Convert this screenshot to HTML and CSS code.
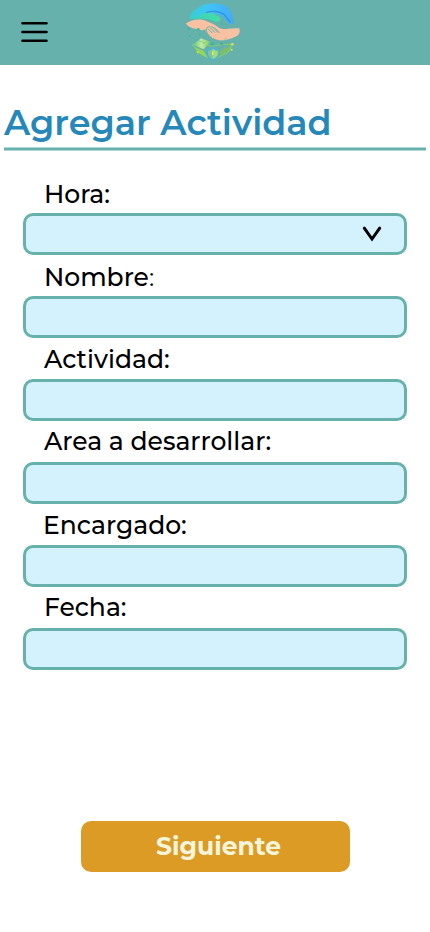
FILE: index.html
```html
<!DOCTYPE html>
<html lang="es">
<head>
<meta charset="utf-8">
<meta name="viewport" content="width=device-width, initial-scale=1">
<title>Agregar Actividad</title>
<link rel="stylesheet" href="styles.css">
</head>
<body>
<header class="topbar">
  <button class="menu" type="button" aria-label="Menú">
    <svg width="28" height="22" viewBox="0 0 28 22"><path d="M2.5 2.2H26.5M2.5 11H26.5M2.5 19.8H26.5" stroke="#000" stroke-width="2.6" stroke-linecap="round"/></svg>
  </button>
  <svg class="logo" width="66" height="65" viewBox="0 0 198 195">
    <defs>
      <linearGradient id="sky" x1="0" x2="1"><stop offset="0" stop-color="#35cfd0"/><stop offset=".4" stop-color="#40c4f8"/><stop offset="1" stop-color="#42aaf5"/></linearGradient>
      <linearGradient id="mint" x1="0" x2="1"><stop offset="0" stop-color="#3ccfc4"/><stop offset="1" stop-color="#42dfa4"/></linearGradient>
      <linearGradient id="leaf" x1="0" x2="1"><stop offset="0" stop-color="#62c878"/><stop offset=".5" stop-color="#c3eba0"/><stop offset="1" stop-color="#7cc763"/></linearGradient>
    </defs>
    <path d="M30 56C28 38 46 30 57 22C66 14 78 11 93 11C114 9 131 12 143 22C154 32 157 53 164 69L158 72C153 68 149 61 145 57L154 71L148 72L132 54C120 43 105 40 90 42C72 44 55 50 30 56Z" fill="url(#sky)"/>
    <path d="M30 57C48 51 60 42 78 39C94 36 104 44 119 51C125 57 119 65 110 65C99 65 92 58 80 57C66 55 49 57 30 57Z" fill="url(#mint)"/>
    <path d="M79 38C96 31 118 34 132 43L151 67" fill="none" stroke="#3493dc" stroke-width="4"/>
    <path d="M18 70C36 58 60 55 77 62C91 68 105 73 119 85C132 91 145 83 178 85C181 98 178 106 166 110C148 118 126 125 112 119C101 117 93 112 88 106L79 96L75 88C65 94 58 88 48 87C34 85 22 79 18 70Z" fill="#f7c1a2"/>
    <path d="M79 85C84 78 94 80 101 83C108 86 112 91 118 99M80 85C77 101 88 112 102 118M84 86L96 99M92 84L105 98M101 84L113 97" fill="none" stroke="#73b2a5" stroke-width="3"/>
    <path d="M39 134L63 115L91 125L71 148Z" fill="url(#leaf)"/>
    <path d="M42 140L72 153L83 174L61 162Z" fill="#95d557"/>
    <path d="M118 151L155 136L149 154L116 170Z" fill="#7bbd71"/>
    <path d="M37 132L53 157L99 180L145 157L157 133M67 128L94 139L125 134L157 133" fill="none" stroke="#91d957" stroke-width="2"/>
    <path d="M45 88L28 108L49 120L74 128M49 86L60 102L80 118M139 112L125 134" fill="none" stroke="#4fb89c" stroke-width="1.5"/>
    <g fill="#38b99e"><circle cx="26" cy="86" r="4"/><circle cx="29" cy="108" r="3"/><circle cx="55" cy="88" r="4"/><circle cx="59" cy="105" r="3"/><circle cx="97" cy="131" r="5"/><circle cx="125" cy="131" r="4"/><circle cx="139" cy="74" r="2"/><circle cx="126" cy="71" r="3"/></g>
    <g fill="#d3e84e"><circle cx="157" cy="133" r="4"/><circle cx="155" cy="149" r="3"/><circle cx="53" cy="157" r="3"/></g>
    <path d="M99 143C94 148 88 150 82 151V162C83 171 90 176 99 180C109 176 116 170 117 162V151C110 150 104 148 99 143Z" fill="#7fc6a0" stroke="#42b5dc" stroke-width="4"/>
    <path d="M99 147C105 151 109 153 113 154V161C112 168 106 173 99 176Z" fill="#a6d97a"/>
    <path d="M98 153V165" fill="none" stroke="#dcee65" stroke-width="4"/>
  </svg>
</header>
<main>
  <h1 class="title">Agregar Actividad</h1>
  <form class="form">
    <label class="field"><span class="name">Hora:</span>
      <span class="box select"><svg width="20" height="16" viewBox="0 0 20 16"><path d="M2.3 2.2L10 13L17.7 2.2" fill="none" stroke="#000" stroke-width="3" stroke-linecap="round"/></svg></span></label>
    <label class="field"><span class="name">Nombre<span class="thin">:</span></span><input class="box" type="text"></label>
    <label class="field"><span class="name up-1">Actividad:</span><input class="box" type="text"></label>
    <label class="field"><span class="name up-2">Area a desarrollar:</span><input class="box" type="text"></label>
    <label class="field"><span class="name up-1 wide">Encargado:</span><input class="box" type="text"></label>
    <label class="field"><span class="name up-2">Fecha:</span><input class="box" type="text"></label>
  </form>
  <button class="next" type="button">Siguiente</button>
</main>
</body>
</html>
```
FILE: styles.css
```css
* { box-sizing: border-box; }
body {
  margin: 0;
  height: 932px;
  background: #fff;
  color: #000;
  font-family: Montserrat, Inter, sans-serif;
}
.topbar {
  display: flex;
  height: 65px;
  padding-left: 20px;
  background: #67b1ac;
}
.menu {
  width: 28px;
  height: 22px;
  margin: 21px 132px 0 0;
  padding: 0;
  border: 0;
  background: none;
}
.menu svg, .logo { display: block; }
.title {
  height: 86px;
  margin: 0 4px;
  padding-top: 36px;
  background: linear-gradient(#b3d8d5 1px, #67b1ac 1px 3px, #b3d8d5 3px) bottom / 100% 4px no-repeat;
  color: #2588b9;
  font-size: 35px;
  font-weight: 600;
  line-height: 44px;
  white-space: nowrap;
}
.form {
  display: flex;
  flex-direction: column;
  padding: 21px 23px 0;
}
.field {
  display: flex;
  flex-direction: column;
  height: 83px;
}
.name {
  height: 41px;
  padding: 6px 0 0 21px;
  font-size: 25px;
  font-weight: 500;
  line-height: 32px;
  white-space: nowrap;
}
.up-1 { padding-top: 5px; }
.up-2 { padding-top: 4px; }
.wide { padding-left: 20px; }
.thin { font-weight: 400; }
.box {
  width: 100%;
  height: 42px;
  padding: 0 20px;
  border: 3px solid #67b1ac;
  border-radius: 10px;
  background: #d4f2fe;
  font: inherit;
  font-size: 20px;
}
.select {
  display: flex;
  align-items: center;
  justify-content: flex-end;
  padding-right: 22px;
}
.next {
  display: block;
  width: 269px;
  height: 51px;
  margin: 151px 0 0 81px;
  padding: 0 0 2px 6px;
  border: 0;
  border-radius: 10px;
  background: #db9b24;
  color: #f5f5dc;
  font: inherit;
  font-size: 25px;
  font-weight: 700;
}
```
